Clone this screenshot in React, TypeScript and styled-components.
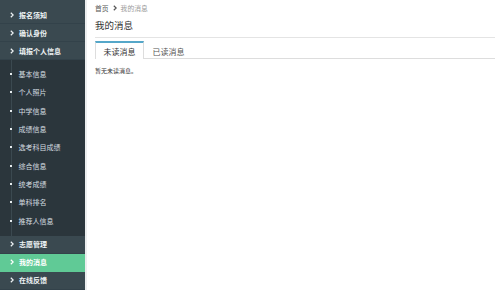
import * as React from "react";
import styled, { createGlobalStyle, css } from "styled-components";

const GlobalStyle = createGlobalStyle`
  html, body {
    margin: 0;
    padding: 0;
    background: #ffffff;
  }
  body {
    font-family: "Noto Sans CJK SC", "Noto Sans", "Liberation Sans", sans-serif;
  }
`;

const Page = styled.div`
  display: grid;
  grid-template-columns: 85px 1fr;
  height: 100vh;
  overflow: hidden;
`;

const Sidebar = styled.nav`
  background: #3a4950;
  padding-top: 6px;
  display: flex;
  flex-direction: column;
`;

const NavItem = styled.div<{ $active?: boolean }>`
  height: 18px;
  box-sizing: border-box;
  display: flex;
  align-items: center;
  gap: 5px;
  padding-left: 10px;
  border-bottom: 1px solid #33424a;
  color: #eef3f5;
  font-size: 7px;
  font-weight: bold;
  background: #3a4950;
  ${(p) =>
    p.$active &&
    css`
      background: #60ca96;
      color: #ffffff;
      border-bottom-color: #60ca96;
    `}
`;

const SubList = styled.div`
  position: relative;
  background: #2b363c;
  padding: 5px 0 6px;
  &::before {
    content: "";
    position: absolute;
    left: 10.5px;
    top: 0;
    bottom: 0;
    width: 1px;
    background: #3b4950;
  }
`;

const SubItem = styled.div`
  position: relative;
  height: 18.3px;
  display: flex;
  align-items: center;
  padding-left: 18.5px;
  color: #d5dde0;
  font-size: 7px;
  &::before {
    content: "";
    position: absolute;
    left: 10px;
    top: 50%;
    width: 2px;
    height: 2px;
    margin-top: -1px;
    background: #e6ecee;
  }
`;

const Main = styled.main`
  border-left: 2px solid #eceeef;
  padding: 0 6px 0 8px;
  display: flex;
  flex-direction: column;
`;

const Breadcrumb = styled.div`
  height: 16px;
  display: flex;
  align-items: center;
  gap: 4px;
  font-size: 6.8px;
  color: #555;
`;

const Crumb = styled.span<{ $current?: boolean }>`
  color: ${(p) => (p.$current ? "#999" : "#555")};
`;

const Title = styled.h1`
  margin: 0;
  font-size: 9.5px;
  font-weight: normal;
  color: #333;
  line-height: 18px;
  padding-bottom: 3px;
  border-bottom: 1px solid #e4e4e4;
`;

const TabBar = styled.div`
  margin-top: 3px;
  display: flex;
  height: 17px;
  border-bottom: 1px solid #dddddd;
`;

const Tab = styled.div<{ $active?: boolean }>`
  box-sizing: border-box;
  height: 18px;
  padding: 0 7.5px;
  display: flex;
  align-items: center;
  font-size: 8px;
  color: #555;
  border-top: 2px solid transparent;
  border-left: 1px solid transparent;
  border-right: 1px solid transparent;
  ${(p) =>
    p.$active &&
    css`
      background: #fff;
      color: #333;
      border-top-color: #55a7c9;
      border-left-color: #dddddd;
      border-right-color: #dddddd;
    `}
`;

const Empty = styled.p`
  margin: 7px 0 0;
  font-size: 6px;
  color: #333;
`;

const Chevron = () => (
  <svg width="4" height="6" viewBox="0 0 4 6">
    <path d="M0.8 0.7 L3.2 3 L0.8 5.3" fill="none" stroke="currentColor" strokeWidth="1.2" />
  </svg>
);

const subItems = [
  "基本信息",
  "个人照片",
  "中学信息",
  "成绩信息",
  "选考科目成绩",
  "综合信息",
  "统考成绩",
  "单科排名",
  "推荐人信息",
];

export default function App() {
  return (
    <>
      <GlobalStyle />
      <Page>
        <Sidebar>
          <NavItem>
            <Chevron />
            报名须知
          </NavItem>
          <NavItem>
            <Chevron />
            确认身份
          </NavItem>
          <NavItem>
            <Chevron />
            填报个人信息
          </NavItem>
          <SubList>
            {subItems.map((s) => (
              <SubItem key={s}>{s}</SubItem>
            ))}
          </SubList>
          <NavItem>
            <Chevron />
            志愿管理
          </NavItem>
          <NavItem $active>
            <Chevron />
            我的消息
          </NavItem>
          <NavItem>
            <Chevron />
            在线反馈
          </NavItem>
        </Sidebar>
        <Main>
          <Breadcrumb>
            <Crumb>首页</Crumb>
            <Chevron />
            <Crumb $current>我的消息</Crumb>
          </Breadcrumb>
          <Title>我的消息</Title>
          <TabBar>
            <Tab $active>未读消息</Tab>
            <Tab>已读消息</Tab>
          </TabBar>
          <Empty>暂无未读消息。</Empty>
        </Main>
      </Page>
    </>
  );
}
